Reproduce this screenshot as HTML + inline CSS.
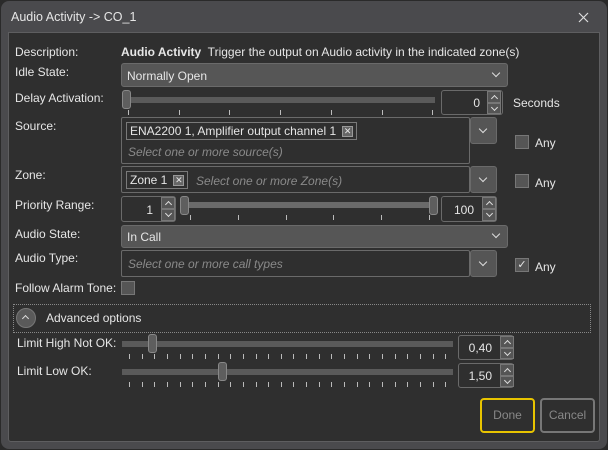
<!DOCTYPE html><html><head><style>
*{box-sizing:border-box;margin:0;padding:0}
body{width:608px;height:450px;background:#2a2a2a;font-family:"Liberation Sans",sans-serif;font-size:12px;color:#e6e6e6;position:relative;overflow:hidden}
.a{position:absolute}
.win{left:1px;top:1px;width:606px;height:448px;background:#4a4a4d;border-radius:8px}
.in{left:8px;top:32px;width:592px;height:410px;background:#2f2f2f;border:1px solid #5e5e60;border-radius:0 0 3px 3px}
.lbl{position:absolute;left:15px;white-space:nowrap}
.combo{background:#565656;border:1px solid #6a6a6a;border-radius:3px}
.box{border:1px solid #6a6a6a;border-radius:2px;background:#2f2f2f}
.btn{background:#555;border:1px solid #6a6a6a;border-radius:3px}
.chev{position:absolute;width:6px;height:6px;border-right:1.3px solid #ddd;border-bottom:1.3px solid #ddd;transform:rotate(45deg)}
.ph{position:absolute;font-style:italic;color:#8a8a8a;white-space:nowrap}
.tag{position:absolute;border:1px solid #7a7a7a;height:18px;padding:1px 3px;white-space:nowrap}
.x{display:inline-block;width:11px;height:11px;background:#666;border:1px solid #999;font-size:9px;line-height:9px;text-align:center;vertical-align:1px;margin-left:6px}
.track{position:absolute;background:#5a5a5a;height:6px}
.thumb{position:absolute;width:9px;height:19px;background:#5e5e5e;border:1px solid #888;border-radius:3px}
.tick{position:absolute;width:1px;height:5px;background:#bbb}
.spin{position:absolute;border:1px solid #6a6a6a;border-radius:3px;background:#2f2f2f;text-align:right;padding-right:5px}
.sb{position:absolute;width:14px;background:#555;border:1px solid #777}
.sb::after{content:"";position:absolute;left:4px;width:4px;height:4px;border-right:1.2px solid #ddd;border-bottom:1.2px solid #ddd}
.up::after{top:4px;transform:rotate(-135deg)}
.dn::after{top:1px;transform:rotate(45deg)}
.cb{position:absolute;width:14px;height:14px;background:#555;border:1px solid #777}
</style></head><body>
<div class="a win"></div>
<div class="a" style="left:11px;top:10px;font-size:12.5px">Audio Activity -&gt; CO_1</div>
<svg class="a" style="left:578px;top:12px" width="11" height="11"><path d="M1 1L10 10M10 1L1 10" stroke="#ddd" stroke-width="1.2"/></svg>
<div class="a in"></div>

<div class="lbl" style="top:45px">Description:</div>
<div class="a" style="left:121px;top:45px;white-space:nowrap"><b>Audio Activity</b>&nbsp; Trigger the output on Audio activity in the indicated zone(s)</div>

<div class="lbl" style="top:65px">Idle State:</div>
<div class="a combo" style="left:121px;top:63px;width:387px;height:24px"><span class="a" style="left:5px;top:5px">Normally Open</span></div>
<div class="chev" style="left:493px;top:70px"></div>

<div class="lbl" style="top:91px">Delay Activation:</div>
<div class="track" style="left:122px;top:97px;width:313px"></div>
<div class="thumb" style="left:122px;top:90px;height:19px"></div>
<div class="spin" style="left:441px;top:90px;width:62px;height:25px;padding:5px 22px 0 0">0</div>
<div class="sb up" style="left:487px;top:91px;height:12px"></div><div class="sb dn" style="left:487px;top:103px;height:11px"></div>
<div class="a" style="left:513px;top:96px">Seconds</div>

<div class="lbl" style="top:119px">Source:</div>
<div class="a box" style="left:121px;top:117px;width:349px;height:47px"></div>
<div class="tag" style="left:126px;top:122px">ENA2200 1, Amplifier output channel 1<span class="x">✕</span></div>
<div class="ph" style="left:128px;top:145px">Select one or more source(s)</div>
<div class="a btn" style="left:470px;top:117px;width:27px;height:27px"></div><div class="chev" style="left:480px;top:126px"></div>
<div class="cb" style="left:515px;top:135px"></div><div class="a" style="left:535px;top:136px">Any</div>

<div class="lbl" style="top:168px">Zone:</div>
<div class="a box" style="left:121px;top:166px;width:349px;height:27px"></div>
<div class="tag" style="left:126px;top:171px">Zone 1<span class="x">✕</span></div>
<div class="ph" style="left:196px;top:174px">Select one or more Zone(s)</div>
<div class="a btn" style="left:470px;top:166px;width:27px;height:27px"></div><div class="chev" style="left:480px;top:175px"></div>
<div class="cb" style="left:515px;top:174px"></div><div class="a" style="left:535px;top:176px">Any</div>

<div class="lbl" style="top:198px">Priority Range:</div>
<div class="spin" style="left:121px;top:196px;width:55px;height:26px;padding:6px 22px 0 0">1</div>
<div class="sb up" style="left:161px;top:197px;height:12px"></div><div class="sb dn" style="left:161px;top:209px;height:12px"></div>
<div class="track" style="left:182px;top:202px;width:254px;background:#6a6a6a"></div>
<div class="thumb" style="left:180px;top:196px"></div><div class="thumb" style="left:429px;top:196px"></div>
<div class="spin" style="left:441px;top:196px;width:56px;height:26px;padding:6px 22px 0 0">100</div>
<div class="sb up" style="left:482px;top:197px;height:12px"></div><div class="sb dn" style="left:482px;top:209px;height:12px"></div>

<div class="lbl" style="top:227px">Audio State:</div>
<div class="a combo" style="left:121px;top:225px;width:387px;height:23px"><span class="a" style="left:5px;top:4px">In Call</span></div>
<div class="chev" style="left:493px;top:231px"></div>

<div class="lbl" style="top:251px">Audio Type:</div>
<div class="a box" style="left:121px;top:250px;width:349px;height:27px"></div>
<div class="ph" style="left:128px;top:257px">Select one or more call types</div>
<div class="a btn" style="left:470px;top:250px;width:27px;height:27px"></div><div class="chev" style="left:480px;top:259px"></div>
<div class="cb" style="left:515px;top:258px;font-size:11px;line-height:12px;text-align:center">✓</div><div class="a" style="left:535px;top:260px">Any</div>

<div class="lbl" style="top:281px">Follow Alarm Tone:</div>
<div class="cb" style="left:121px;top:281px"></div>

<div class="a" style="left:13px;top:304px;width:578px;height:29px;border:1px dotted #888"></div>
<div class="a" style="left:16px;top:308px;width:20px;height:20px;border-radius:50%;background:#5a5a5a;border:1px solid #777"></div>
<div class="chev" style="left:23px;top:316px;transform:rotate(-135deg);width:5px;height:5px"></div>
<div class="a" style="left:46px;top:311px">Advanced options</div>

<div class="lbl" style="left:17px;top:336px">Limit High Not OK:</div>
<div class="track" style="left:122px;top:341px;width:331px"></div>
<div class="thumb" style="left:148px;top:334px"></div>
<div class="spin" style="left:458px;top:335px;width:56px;height:25px;padding:5px 21px 0 0">0,40</div>
<div class="sb up" style="left:500px;top:336px;height:12px"></div><div class="sb dn" style="left:500px;top:348px;height:11px"></div>

<div class="lbl" style="left:17px;top:364px">Limit Low OK:</div>
<div class="track" style="left:122px;top:369px;width:331px"></div>
<div class="thumb" style="left:218px;top:362px"></div>
<div class="spin" style="left:458px;top:363px;width:56px;height:25px;padding:5px 21px 0 0">1,50</div>
<div class="sb up" style="left:500px;top:364px;height:12px"></div><div class="sb dn" style="left:500px;top:376px;height:11px"></div>

<div class="a" style="left:480px;top:398px;width:55px;height:35px;border:2px solid #e8c400;border-radius:4px;color:#888;text-align:center;line-height:31px">Done</div>
<div class="a" style="left:540px;top:398px;width:55px;height:35px;border:2px solid #777;border-radius:4px;color:#888;text-align:center;line-height:31px">Cancel</div>

<div id="ticks"></div>
<script>
var h='';
for(var i=0;i<7;i++)h+='<div class="tick" style="left:'+(128+i*50.7)+'px;top:110px"></div>';
for(var i=0;i<6;i++)h+='<div class="tick" style="left:'+(190+i*47.8)+'px;top:215px"></div>';
for(var i=0;i<26;i++){var x=129+i*12.65;h+='<div class="tick" style="left:'+x+'px;top:354px"></div><div class="tick" style="left:'+x+'px;top:382px"></div>';}
document.getElementById('ticks').innerHTML=h;
</script>
</body></html>
